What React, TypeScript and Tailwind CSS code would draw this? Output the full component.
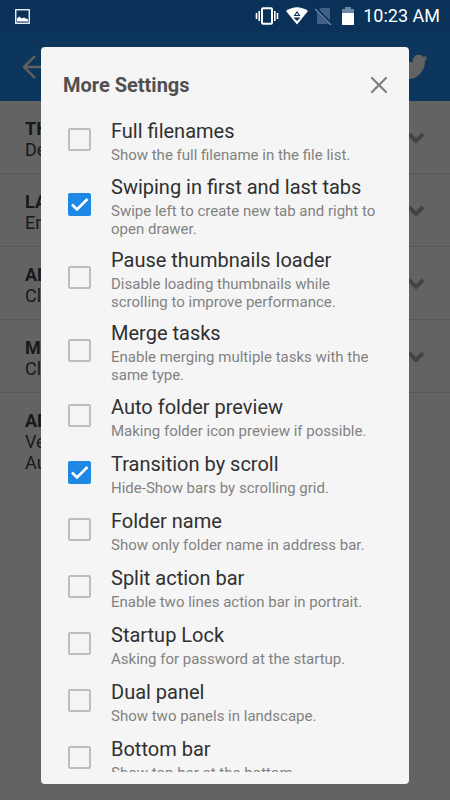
import { X } from 'lucide-react';
import { FaTwitter } from 'react-icons/fa';

const sections = [
  { title: 'THEME', lines: ['Default'], expandable: true },
  { title: 'LANGUAGE', lines: ['English'], expandable: true },
  { title: 'ADS', lines: ['Click'], expandable: true },
  { title: 'MORE', lines: ['Click'], expandable: true },
  { title: 'ABOUT', lines: ['Version', 'Author'], expandable: false },
];

const settings = [
  { id: 'full-names', title: 'Full filenames', text: 'Show the full filename in the file list.', checked: false },
  { id: 'swiping', title: 'Swiping in first and last tabs', text: 'Swipe left to create new tab and right to open drawer.', checked: true },
  { id: 'pause-thumbs', title: 'Pause thumbnails loader', text: 'Disable loading thumbnails while scrolling to improve performance.', checked: false },
  { id: 'merge', title: 'Merge tasks', text: 'Enable merging multiple tasks with the same type.', checked: false },
  { id: 'preview', title: 'Auto folder preview', text: 'Making folder icon preview if possible.', checked: false },
  { id: 'transition', title: 'Transition by scroll', text: 'Hide-Show bars by scrolling grid.', checked: true },
  { id: 'folder-name', title: 'Folder name', text: 'Show only folder name in address bar.', checked: false },
  { id: 'split', title: 'Split action bar', text: 'Enable two lines action bar in portrait.', checked: false },
  { id: 'lock', title: 'Startup Lock', text: 'Asking for password at the startup.', checked: false },
  { id: 'dual', title: 'Dual panel', text: 'Show two panels in landscape.', checked: false },
  { id: 'bottom-bar', title: 'Bottom bar', text: 'Show top bar at the bottom.', checked: false },
];

function StatusBar() {
  return (
    <div className="relative z-10 flex h-8 items-center justify-between bg-[#0a3157] pl-[15px] pr-[10px] text-white">
      <svg width="15" height="15" viewBox="0 0 15 15" aria-hidden="true">
        <rect x="0.75" y="0.75" width="13.5" height="13.5" fill="none" stroke="currentColor" strokeWidth="1.3" />
        <path d="M2 12.5V9.5L4.5 7.5L6.5 9.5L9 8.5L13 10.5V12.5Z" fill="currentColor" />
      </svg>
      <div className="flex items-center">
        <svg width="24" height="18" viewBox="0 0 24 18" className="mr-[7px]" aria-hidden="true">
          <rect x="7" y="1.2" width="10" height="15.6" rx="1" fill="none" stroke="currentColor" strokeWidth="2" />
          <path d="M4.2 4V14M1.5 6V12M19.8 4V14M22.5 6V12" stroke="currentColor" strokeWidth="1.6" />
        </svg>
        <svg width="22" height="18" viewBox="0 0 22 18" className="mr-[7px]" aria-hidden="true">
          <path d="M0 4Q11 -3.5 22 4L11 17.5Z" fill="currentColor" />
          <path d="M11 4L14.5 9H7.5ZM7.5 10.5H14.5L11 14Z" fill="#0a3157" />
          <path d="M11 6L12.5 8H9.5Z" fill="currentColor" />
        </svg>
        <svg width="17" height="18" viewBox="0 0 17 18" className="mr-[10px]" aria-hidden="true">
          <path d="M6 1H15V17H2V5Z" fill="#3f6188" />
          <path d="M0 1L16 17" stroke="#0a3157" strokeWidth="3.5" />
          <path d="M0 2L16 18" stroke="#6c87a3" strokeWidth="1.5" />
        </svg>
        <svg width="12" height="18" viewBox="0 0 12 18" className="mr-[9px]" aria-hidden="true">
          <path d="M3 0H9V2H12V6H0V2H3Z" fill="#6c87a3" />
          <path d="M0 6H12V18H0Z" fill="currentColor" />
        </svg>
        <span className="text-[18px] leading-6">10:23 AM</span>
      </div>
    </div>
  );
}

function SettingRow({ setting }: { setting: typeof settings[0] }) {
  return (
    <li className="flex min-h-[57px] items-center pl-[27px] pr-6">
      <span className="relative mr-5 h-[23px] w-[23px] shrink-0">
        <input
          id={setting.id}
          type="checkbox"
          defaultChecked={setting.checked}
          className="peer block h-[23px] w-[23px] appearance-none rounded-[2px] border-2 border-[#bdbdbd] checked:border-[#1e88e5] checked:bg-[#1e88e5]"
        />
        <svg
          viewBox="0 0 23 23"
          className="pointer-events-none absolute inset-0 hidden peer-checked:block"
          fill="none"
          stroke="white"
          strokeWidth="2.6"
          aria-hidden="true"
        >
          <path d="M4 11.5L9 16.5L19.5 6" />
        </svg>
      </span>
      <label htmlFor={setting.id} className="pb-[3px] pt-[6px]">
        <span className="block text-[20px] leading-[26px] text-[#303030]">{setting.title}</span>
        <span className="mt-[2px] block text-[15px] leading-[18px] text-[#828282]">{setting.text}</span>
      </label>
    </li>
  );
}

function SettingsDialog() {
  return (
    <div className="absolute inset-0 flex bg-black/60 px-[41px] pb-4 pt-[47px]">
      <div
        role="dialog"
        aria-labelledby="dialog-title"
        className="flex min-h-0 w-full flex-col rounded-[4px] bg-[#f5f5f5] pb-3"
      >
        <div className="flex h-16 shrink-0 items-center justify-between pl-[22px] pr-4 pt-[11px]">
          <h2 id="dialog-title" className="text-[20px] font-bold leading-6 text-[#505050]">More Settings</h2>
          <button type="button" aria-label="Close" className="text-[#808080]">
            <X size={28} strokeWidth={1.9} />
          </button>
        </div>
        <ul className="min-h-0 flex-1 overflow-hidden">
          {settings.map((setting) => (
            <SettingRow key={setting.id} setting={setting} />
          ))}
        </ul>
      </div>
    </div>
  );
}

function App() {
  return (
    <div className="relative flex h-screen flex-col overflow-hidden bg-[#f8f8f8] font-['Roboto',sans-serif]">
      <StatusBar />
      <header className="flex h-[69px] shrink-0 items-center justify-between bg-[#1e88e5] px-[22px] text-[#f5f5f5]">
        <button type="button" aria-label="Back">
          <svg width="28" height="24" viewBox="0 0 28 24" fill="none" stroke="currentColor" strokeWidth="2.4">
            <path d="M13 1L2 12L13 23M2 12H28" />
          </svg>
        </button>
        <a href="#twitter" aria-label="Twitter">
          <FaTwitter size={30} />
        </a>
      </header>
      <main>
        {sections.map((section) => (
          <section
            key={section.title}
            className="flex min-h-[73px] items-center justify-between border-b border-[#dcdcdc] pb-[13px] pl-[25px] pr-[25px] pt-[17px] last:border-b-0"
          >
            <div className="text-[18px] leading-[21px] text-[#404040]">
              <h3 className="font-bold">{section.title}</h3>
              {section.lines.map((line) => (
                <p key={line}>{line}</p>
              ))}
            </div>
            {section.expandable && (
              <svg
                width="18"
                height="16"
                viewBox="0 0 18 16"
                fill="none"
                stroke="#a8a8a8"
                strokeWidth="4"
                aria-hidden="true"
              >
                <path d="M2 3L9 10L16 3" />
              </svg>
            )}
          </section>
        ))}
      </main>
      <SettingsDialog />
    </div>
  );
}

export default App;
